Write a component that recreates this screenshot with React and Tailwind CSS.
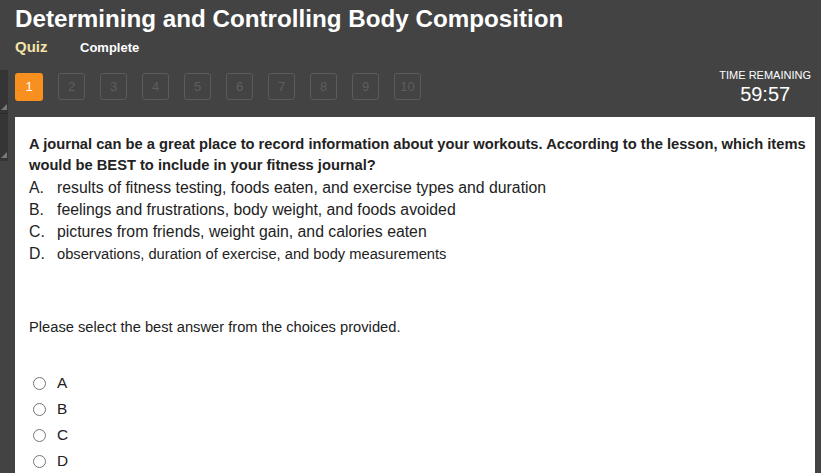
const questions = [1, 2, 3, 4, 5, 6, 7, 8, 9, 10];

const choices = [
  { letter: "A.", text: "results of fitness testing, foods eaten, and exercise types and duration", size: "text-[15.8px]" },
  { letter: "B.", text: "feelings and frustrations, body weight, and foods avoided", size: "text-[15.8px]" },
  { letter: "C.", text: "pictures from friends, weight gain, and calories eaten", size: "text-[15.8px]" },
  { letter: "D.", text: "observations, duration of exercise, and body measurements", size: "text-[14.7px]" },
];

const Grip = () => (
  <svg width="6" height="6" viewBox="0 0 6 6" className="absolute bottom-[3px] right-[1px]">
    <polygon points="6,0 6,6 0,6" fill="#7a7a7a" />
  </svg>
);

export default function App() {
  return (
    <div className="relative w-[821px] h-[473px] overflow-hidden bg-[#434343] font-['Liberation_Sans',Arial,sans-serif]">
      {/* left side strips */}
      <div className="absolute left-0 top-[70px] w-[8px] flex flex-col">
        <div className="relative h-[44px] bg-[#353535] border-b border-[#2a2a2a]">
          <Grip />
        </div>
        <div className="relative h-[47px] bg-[#353535]">
          <Grip />
        </div>
      </div>

      <div className="pl-[15px] pr-[10px]">
        <h1 className="pt-[4px] text-[24.2px] leading-[30px] font-bold text-white">
          Determining and Controlling Body Composition
        </h1>
        <div className="flex items-baseline mt-[2px] h-[22px]">
          <span className="text-[15px] font-bold text-[#f3e3a8] w-[65px]">Quiz</span>
          <span className="text-[13px] font-bold text-white">Complete</span>
        </div>

        <div className="flex justify-between items-start mt-[15px] h-[44px]">
          <div className="flex gap-[15px]">
            {questions.map((n) =>
              n === 1 ? (
                <div
                  key={n}
                  className="w-[28px] h-[28px] rounded-[3px] bg-[#f7901e] text-white text-[13px] flex items-center justify-center"
                >
                  {n}
                </div>
              ) : (
                <div
                  key={n}
                  className="w-[27px] h-[27px] rounded-[3px] border border-[#5b5b5b] text-[#5e5e5e] text-[13px] flex items-center justify-center"
                >
                  {n}
                </div>
              )
            )}
          </div>
          <div className="flex flex-col items-center -mt-[5px]">
            <span className="text-[11px] leading-[14px] text-white">TIME REMAINING</span>
            <span className="text-[20px] leading-[24px] text-white">59:57</span>
          </div>
        </div>
      </div>

      <div className="ml-[15px] w-[800px] h-[360px] bg-white pl-[14px] pt-[17px] text-[#222]">
        <p className="text-[14.7px] leading-[21px] font-bold w-[785px]">
          A journal can be a great place to record information about your workouts. According to the lesson, which items
          would be BEST to include in your fitness journal?
        </p>
        <ul className="mt-[1px]">
          {choices.map((c) => (
            <li key={c.letter} className={`flex leading-[22px] ${c.size}`}>
              <span className="w-[28px] text-[15.8px]">{c.letter}</span>
              <span>{c.text}</span>
            </li>
          ))}
        </ul>

        <p className="mt-[52px] text-[14.7px] leading-[20px]">Please select the best answer from the choices provided.</p>

        <div className="mt-[33px] flex flex-col">
          {["A", "B", "C", "D"].map((l) => (
            <label key={l} className="flex items-center h-[26px] text-[15.4px]">
              <span className="ml-[4px] w-[13px] h-[13px] rounded-full border border-[#767676] bg-white" />
              <span className="ml-[11px]">{l}</span>
            </label>
          ))}
        </div>
      </div>
    </div>
  );
}
